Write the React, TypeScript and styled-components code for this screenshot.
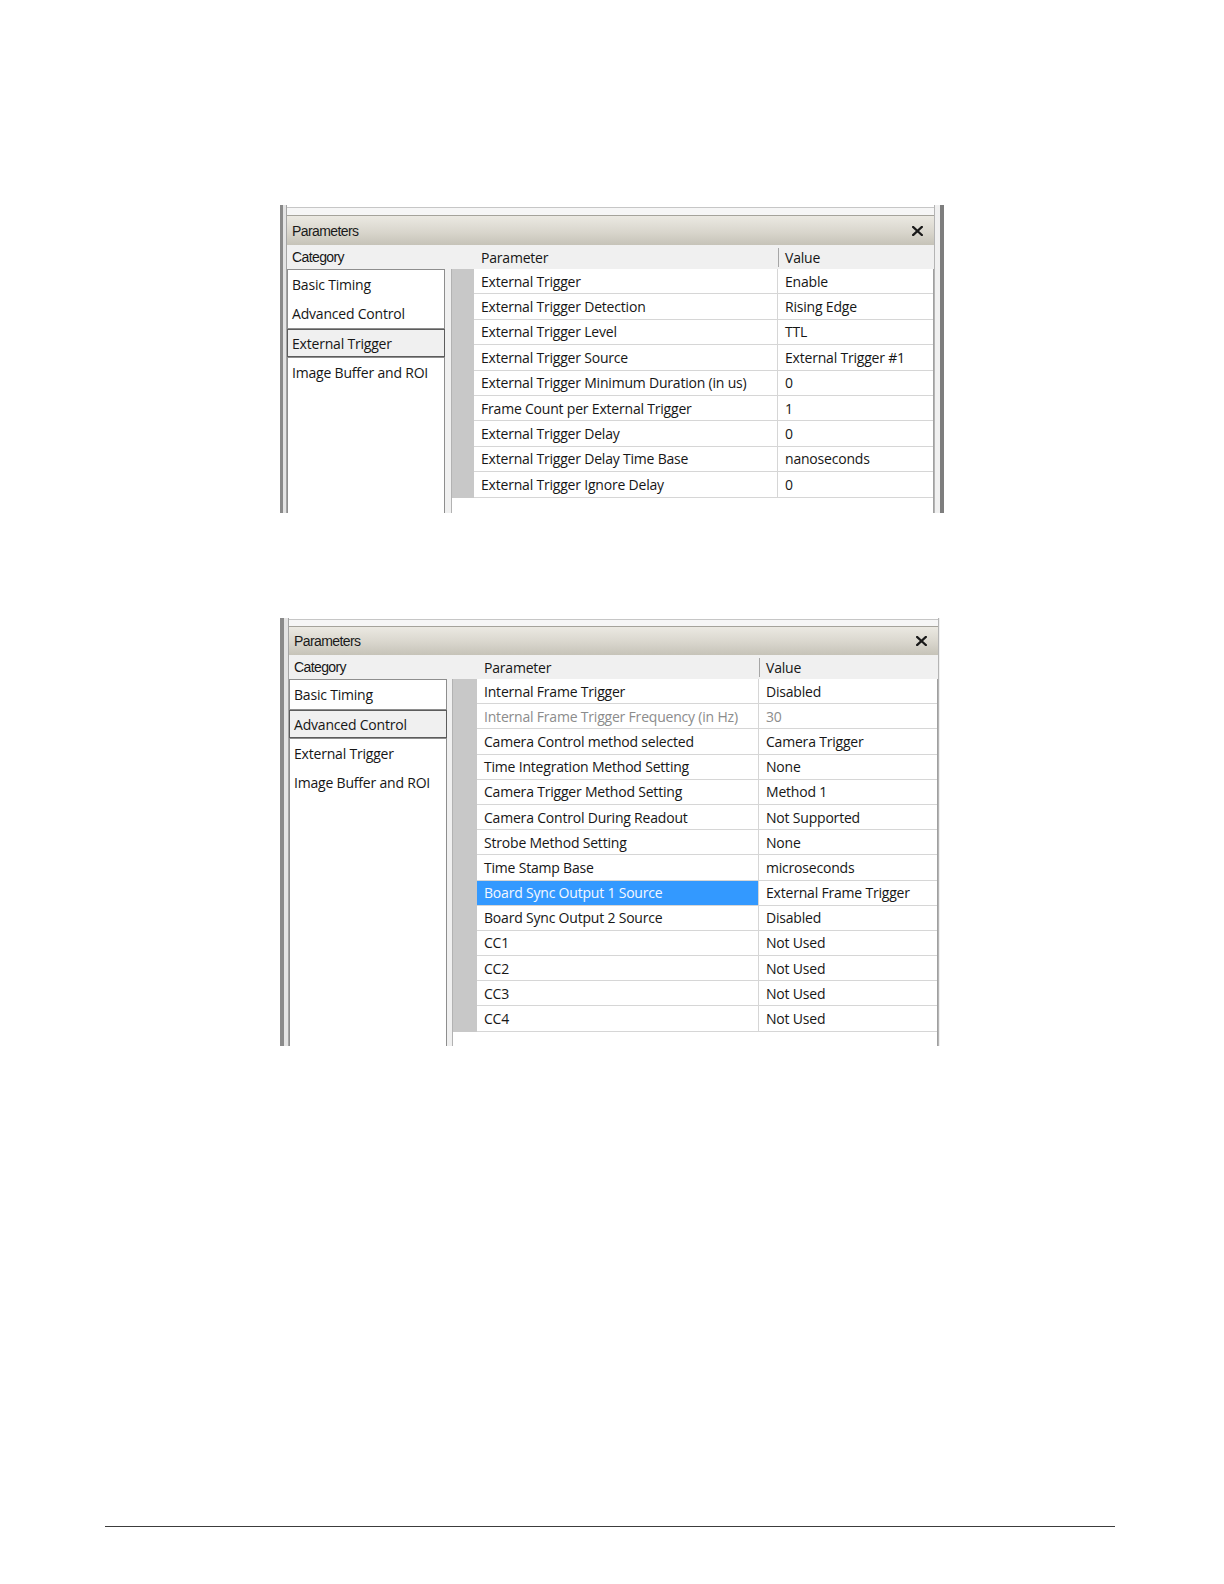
import React from "react";
import styled, { createGlobalStyle } from "styled-components";

const Global = createGlobalStyle`
  html, body { margin: 0; padding: 0; background: #ffffff; }
  body { font-family: "Open Sans", "Noto Sans", sans-serif; color: #161616; }
`;

type Geo = {
  mt: number;
  height: number;
  width: number;
  leftFrame: number;
  rightFrame: "heavy" | "light";
  topStrip: number;
  lineAt: number;
  title: number;
  header: number;
  cat: number;
  gap: number;
  gutter: number;
  param: number;
  row: number;
};

type Row = { p: string; v: string; selected?: boolean; disabled?: boolean };
type CatGroupDef = { items: string[]; selected?: boolean; fill?: boolean };

const Page = styled.main`
  padding-top: 205px;
  min-height: 1584px;
  box-sizing: border-box;
`;

const Window = styled.section<{ $mt: number; $h: number; $w: number }>`
  display: flex;
  margin: ${(p) => p.$mt}px 0 0 280px;
  width: ${(p) => p.$w}px;
  height: ${(p) => p.$h}px;
`;

const LeftFrame = styled.div<{ $w: number }>`
  flex: none;
  box-sizing: border-box;
  width: ${(p) => p.$w}px;
  border-left: ${(p) => (p.$w > 8 ? 4 : 3)}px solid #8a8a8a;
  border-right: 1px solid #a4a4a4;
  background: #e4e4e4;
`;

const RightFrame = styled.div<{ $kind: "heavy" | "light" }>`
  flex: none;
  box-sizing: border-box;
  width: ${(p) => (p.$kind === "heavy" ? 10 : 2)}px;
  border-left: 1px solid #b4b4b4;
  background: #f0f0f0;
  border-right: ${(p) => (p.$kind === "heavy" ? "4px solid #7e7e7e" : "none")};
`;

const Content = styled.div`
  flex: 1;
  min-width: 0;
  display: flex;
  flex-direction: column;
  background: #f0f0f0;
`;

const TopStrip = styled.div<{ $h: number; $line: number }>`
  flex: none;
  height: ${(p) => p.$h}px;
  background: linear-gradient(
    to bottom,
    #ffffff 0,
    #ffffff ${(p) => p.$line}px,
    #c6c6c6 ${(p) => p.$line}px,
    #c6c6c6 ${(p) => p.$line + 1}px,
    #f6f6f6 ${(p) => p.$line + 1}px
  );
`;

const TitleBar = styled.div<{ $h: number }>`
  flex: none;
  box-sizing: border-box;
  height: ${(p) => p.$h}px;
  display: flex;
  align-items: center;
  justify-content: space-between;
  padding: 0 11px 0 5px;
  border-top: 1px solid #a5a39b;
  background: linear-gradient(to bottom, #ebe9e2 0%, #d9d6cd 55%, #c6c3b8 100%);
  font-family: "Liberation Sans", Arial, sans-serif;
  font-size: 14px;
  letter-spacing: -0.6px;
  color: #1a1a1a;
`;

const CloseIcon = styled.svg`
  width: 11px;
  height: 10px;
  display: block;
`;

const HeaderRow = styled.div<{ $h: number; $cols: string }>`
  flex: none;
  height: ${(p) => p.$h}px;
  display: grid;
  grid-template-columns: ${(p) => p.$cols};
  background: #f0f0f0;
`;

const HeaderCell = styled.div<{ $kind: "category" | "column"; $sep?: boolean }>`
  position: relative;
  display: flex;
  align-items: center;
  padding-left: ${(p) => (p.$kind === "category" ? 5 : 7)}px;
  font-family: ${(p) =>
    p.$kind === "category"
      ? '"Liberation Sans", Arial, sans-serif'
      : '"Open Sans", "Noto Sans", sans-serif'};
  font-size: 14px;
  letter-spacing: ${(p) => (p.$kind === "category" ? "-0.6px" : "-0.2px")};
  color: #161616;
  white-space: nowrap;
  &::before {
    content: "";
    display: ${(p) => (p.$sep ? "block" : "none")};
    position: absolute;
    left: 0;
    top: 3px;
    bottom: 2px;
    width: 1px;
    background: #a6a6a6;
  }
`;

const Body = styled.div`
  flex: 1;
  min-height: 0;
  display: flex;
`;

const CategoryColumn = styled.div<{ $w: number }>`
  flex: none;
  width: ${(p) => p.$w}px;
  display: flex;
  flex-direction: column;
`;

const CatGroup = styled.div<{ $fill?: boolean; $selected?: boolean }>`
  box-sizing: border-box;
  flex: ${(p) => (p.$fill ? 1 : "none")};
  border: 1px solid ${(p) => (p.$selected ? "#5c5c5c" : "#8e8e8e")};
  border-bottom: ${(p) => (p.$fill ? "none" : undefined)};
  background: ${(p) => (p.$selected ? "#f0f0f0" : "#ffffff")};
`;

const CatItem = styled.div<{ $selected?: boolean }>`
  height: ${(p) => (p.$selected ? 26 : 29)}px;
  display: flex;
  align-items: center;
  padding-left: 4px;
  font-size: 14px;
  letter-spacing: -0.2px;
  white-space: nowrap;
  color: #161616;
`;

const Gap = styled.div<{ $w: number }>`
  flex: none;
  width: ${(p) => p.$w}px;
  background: #f0f0f0;
`;

const Grid = styled.div`
  flex: 1;
  min-width: 0;
  display: flex;
  flex-direction: column;
  background: #ffffff;
  border-left: 1px solid #b2b2b2;
  border-right: 1px solid #a0a0a0;
`;

const GridRow = styled.div<{ $cols: string; $h: number }>`
  flex: none;
  display: grid;
  grid-template-columns: ${(p) => p.$cols};
  height: ${(p) => p.$h}px;
`;

const Gutter = styled.div`
  background: #c8c8c8;
`;

const Cell = styled.div<{ $param?: boolean; $selected?: boolean; $disabled?: boolean }>`
  box-sizing: border-box;
  display: flex;
  align-items: center;
  padding-left: 7px;
  border-bottom: 1px solid #d6d6d6;
  border-right: ${(p) => (p.$param ? "1px solid #d6d6d6" : "none")};
  background: ${(p) => (p.$selected ? "#3399ff" : "#ffffff")};
  color: ${(p) => (p.$selected ? "#f4f8ff" : p.$disabled ? "#8c8c8c" : "#161616")};
  font-size: 14px;
  letter-spacing: -0.2px;
  white-space: nowrap;
  overflow: hidden;
`;

const Rule = styled.hr`
  margin: 480px 0 0 105px;
  width: 1010px;
  height: 1px;
  border: none;
  background: #3c3c3c;
`;

function ParametersPanel({ geo, cats, rows }: { geo: Geo; cats: CatGroupDef[]; rows: Row[] }) {
  const headCols = `${geo.cat + geo.gap + 1 + geo.gutter}px ${geo.param}px 1fr`;
  const rowCols = `${geo.gutter}px ${geo.param}px 1fr`;
  return (
    <Window $mt={geo.mt} $h={geo.height} $w={geo.width}>
      <LeftFrame $w={geo.leftFrame} />
      <Content>
        <TopStrip $h={geo.topStrip} $line={geo.lineAt} />
        <TitleBar $h={geo.title}>
          <span>Parameters</span>
          <CloseIcon viewBox="0 0 11 10">
            <path d="M1.2 1 L9.8 9 M9.8 1 L1.2 9" stroke="#1a1a1a" strokeWidth="2.3" strokeLinecap="square" />
          </CloseIcon>
        </TitleBar>
        <HeaderRow $h={geo.header} $cols={headCols}>
          <HeaderCell $kind="category">Category</HeaderCell>
          <HeaderCell $kind="column">Parameter</HeaderCell>
          <HeaderCell $kind="column" $sep>
            Value
          </HeaderCell>
        </HeaderRow>
        <Body>
          <CategoryColumn $w={geo.cat}>
            {cats.map((g, i) => (
              <CatGroup key={i} $fill={g.fill} $selected={g.selected}>
                {g.items.map((it) => (
                  <CatItem key={it} $selected={g.selected}>
                    {it}
                  </CatItem>
                ))}
              </CatGroup>
            ))}
          </CategoryColumn>
          <Gap $w={geo.gap} />
          <Grid>
            {rows.map((r) => (
              <GridRow key={r.p} $cols={rowCols} $h={geo.row}>
                <Gutter />
                <Cell $param $selected={r.selected} $disabled={r.disabled}>
                  {r.p}
                </Cell>
                <Cell $disabled={r.disabled}>{r.v}</Cell>
              </GridRow>
            ))}
          </Grid>
        </Body>
      </Content>
      <RightFrame $kind={geo.rightFrame} />
    </Window>
  );
}

const geo1: Geo = {
  mt: 0,
  height: 308,
  width: 664,
  leftFrame: 7,
  rightFrame: "heavy",
  topStrip: 10,
  lineAt: 2,
  title: 30,
  header: 24,
  cat: 158,
  gap: 6,
  gutter: 22,
  param: 304,
  row: 25.4,
};

const geo2: Geo = {
  mt: 105,
  height: 428,
  width: 660,
  leftFrame: 9,
  rightFrame: "light",
  topStrip: 8,
  lineAt: 1,
  title: 29,
  header: 24,
  cat: 158,
  gap: 5,
  gutter: 24,
  param: 282,
  row: 25.2,
};

const cats1: CatGroupDef[] = [
  { items: ["Basic Timing", "Advanced Control"] },
  { items: ["External Trigger"], selected: true },
  { items: ["Image Buffer and ROI"], fill: true },
];

const cats2: CatGroupDef[] = [
  { items: ["Basic Timing"] },
  { items: ["Advanced Control"], selected: true },
  { items: ["External Trigger", "Image Buffer and ROI"], fill: true },
];

const rows1: Row[] = [
  { p: "External Trigger", v: "Enable" },
  { p: "External Trigger Detection", v: "Rising Edge" },
  { p: "External Trigger Level", v: "TTL" },
  { p: "External Trigger Source", v: "External Trigger #1" },
  { p: "External Trigger Minimum Duration (in us)", v: "0" },
  { p: "Frame Count per External Trigger", v: "1" },
  { p: "External Trigger Delay", v: "0" },
  { p: "External Trigger Delay Time Base", v: "nanoseconds" },
  { p: "External Trigger Ignore Delay", v: "0" },
];

const rows2: Row[] = [
  { p: "Internal Frame Trigger", v: "Disabled" },
  { p: "Internal Frame Trigger Frequency (in Hz)", v: "30", disabled: true },
  { p: "Camera Control method selected", v: "Camera Trigger" },
  { p: "Time Integration Method Setting", v: "None" },
  { p: "Camera Trigger Method Setting", v: "Method 1" },
  { p: "Camera Control During Readout", v: "Not Supported" },
  { p: "Strobe Method Setting", v: "None" },
  { p: "Time Stamp Base", v: "microseconds" },
  { p: "Board Sync Output 1 Source", v: "External Frame Trigger", selected: true },
  { p: "Board Sync Output 2 Source", v: "Disabled" },
  { p: "CC1", v: "Not Used" },
  { p: "CC2", v: "Not Used" },
  { p: "CC3", v: "Not Used" },
  { p: "CC4", v: "Not Used" },
];

export default function App() {
  return (
    <>
      <Global />
      <Page>
        <ParametersPanel geo={geo1} cats={cats1} rows={rows1} />
        <ParametersPanel geo={geo2} cats={cats2} rows={rows2} />
        <Rule />
      </Page>
    </>
  );
}
